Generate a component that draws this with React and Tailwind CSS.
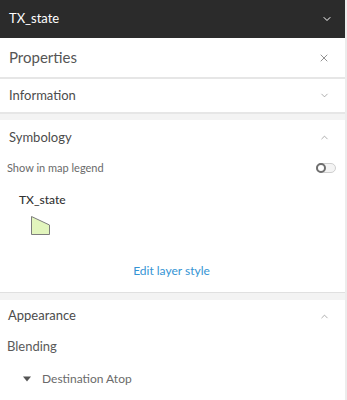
import { ChevronDown, ChevronUp, X } from "lucide-react";

const font = { fontFamily: '"Lato", "Noto Sans", sans-serif' };

const SectionHeader = ({ title, open }) => (
  <div className="flex items-center justify-between h-[35px] pl-[9px] pr-[15px]">
    <span className="text-[13px] text-[#4c4c4c]">{title}</span>
    {open ? (
      <ChevronUp className="w-[11px] h-[11px] text-[#8a8a8a]" strokeWidth={1.5} />
    ) : (
      <ChevronDown className="w-[11px] h-[11px] text-[#8a8a8a]" strokeWidth={1.5} />
    )}
  </div>
);

export default function App() {
  return (
    <div className="w-[347px] h-[400px] overflow-hidden bg-[#ececec]" style={font}>
      <div className="w-[345px] h-full flex flex-col bg-[#f3f3f3]">
        <div className="flex items-center justify-between h-[38px] shrink-0 bg-[#2b2b2b] pl-[9px] pr-[12px]">
          <span className="text-[13px] text-white">TX_state</span>
          <ChevronDown className="w-[12px] h-[12px] text-white" strokeWidth={2} />
        </div>

        <div className="flex items-center justify-between h-[41px] shrink-0 bg-white border-b-2 border-[#e6e6e6] pl-[9px] pr-[15px]">
          <span className="text-[15px] text-[#555555]">Properties</span>
          <X className="w-[12px] h-[12px] text-[#6e6e6e]" strokeWidth={1.5} />
        </div>

        <div className="bg-white border-b-2 border-[#e6e6e6] shrink-0">
          <div className="flex items-center justify-between h-[33px] pl-[9px] pr-[15px]">
            <span className="text-[13px] text-[#4c4c4c]">Information</span>
            <ChevronDown className="w-[11px] h-[11px] text-[#8a8a8a]" strokeWidth={1.5} />
          </div>
        </div>

        <div className="mt-[6px] bg-white border-b border-[#e0e0e0] shrink-0">
          <SectionHeader title="Symbology" open />
          <div className="flex items-center justify-between pl-[7px] pr-[9px] h-[26px]">
            <span className="text-[11px] text-[#6a6a6a]">Show in map legend</span>
            <div className="w-[20px] h-[10px] rounded-full border border-[#cfcfcf] bg-[#f4f4f4] flex items-center">
              <div className="w-[10px] h-[10px] rounded-full border-2 border-[#6e6e6e] bg-white -ml-px" />
            </div>
          </div>
          <div className="pl-[19px] pt-[10px]">
            <div className="text-[12px] text-[#323232] font-medium">TX_state</div>
            <svg width="24" height="24" viewBox="0 0 24 24" className="mt-[6px] ml-[11px]">
              <path d="M1.5 1.5 L19.5 10 L19.5 19.5 L1.5 19.5 Z" fill="#e2f5bd" stroke="#7d7d7d" strokeWidth="1" />
            </svg>
          </div>
          <div className="flex justify-center pt-[23px] pb-[12px] pr-[2px]">
            <span className="text-[12px] text-[#3594d4]">Edit layer style</span>
          </div>
        </div>

        <div className="mt-[7px] bg-white flex-1">
          <div className="flex items-center justify-between h-[32px] pl-[8px] pr-[15px]">
            <span className="text-[13px] text-[#4c4c4c]">Appearance</span>
            <ChevronUp className="w-[11px] h-[11px] text-[#8a8a8a]" strokeWidth={1.5} />
          </div>
          <div className="pl-[7px] pt-[5px] text-[13px] text-[#5a5a5a]">Blending</div>
          <div className="flex items-center pl-[23px] pt-[13px] gap-[11px]">
            <svg width="8" height="6" viewBox="0 0 8 6">
              <path d="M0 0.5 L8 0.5 L4 5.5 Z" fill="#555555" />
            </svg>
            <span className="text-[12px] text-[#6a6a6a]">Destination Atop</span>
          </div>
        </div>
      </div>
    </div>
  );
}
